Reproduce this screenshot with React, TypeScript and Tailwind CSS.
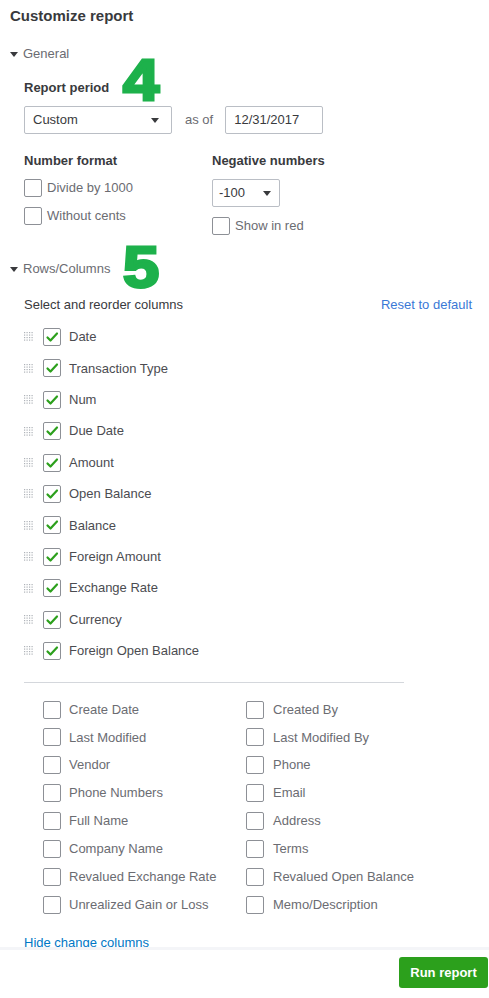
import React from "react";

const SELECTED_COLUMNS = [
  "Date",
  "Transaction Type",
  "Num",
  "Due Date",
  "Amount",
  "Open Balance",
  "Balance",
  "Foreign Amount",
  "Exchange Rate",
  "Currency",
  "Foreign Open Balance",
];

const OTHER_COLUMNS: [string, string][] = [
  ["Create Date", "Created By"],
  ["Last Modified", "Last Modified By"],
  ["Vendor", "Phone"],
  ["Phone Numbers", "Email"],
  ["Full Name", "Address"],
  ["Company Name", "Terms"],
  ["Revalued Exchange Rate", "Revalued Open Balance"],
  ["Unrealized Gain or Loss", "Memo/Description"],
];

function Caret({ className = "" }: { className?: string }) {
  return (
    <svg width="8" height="5" viewBox="0 0 8 5" className={className}>
      <path d="M0 0h8L4 5z" fill="currentColor" />
    </svg>
  );
}

function Checkbox({ checked = false }: { checked?: boolean }) {
  return (
    <span className="flex h-[18px] w-[18px] shrink-0 items-center justify-center rounded-[2px] border border-[#8d9096] bg-white">
      {checked && (
        <svg width="14" height="12" viewBox="0 0 14 12">
          <path d="M2.5 6.5l3 3L12 2.5" fill="none" stroke="#2ca01c" strokeWidth="2.2" strokeLinecap="round" strokeLinejoin="round" />
        </svg>
      )}
    </span>
  );
}

function DragHandle() {
  const dots = [];
  for (let r = 0; r < 4; r++) {
    for (let c = 0; c < 4; c++) {
      dots.push(<rect key={`${r}-${c}`} x={c * 2.5} y={r * 2.5} width="1.2" height="1.2" fill="#aeb2b8" />);
    }
  }
  return (
    <svg width="9" height="9" viewBox="0 0 9 9" className="shrink-0">
      {dots}
    </svg>
  );
}

function SectionToggle({ label }: { label: string }) {
  return (
    <div className="flex h-[20px] items-center gap-[5px] px-[10px] text-[13px] text-[#6b6c72]">
      <Caret className="text-[#393a3d]" />
      <span>{label}</span>
    </div>
  );
}

function Annotation({ children, className }: { children: React.ReactNode; className: string }) {
  return (
    <span
      className={`absolute left-[123px] origin-left scale-x-[1.12] text-[58px] leading-[58px] font-bold text-[#1db14b] [-webkit-text-stroke:3px_#1db14b] ${className}`}
    >
      {children}
    </span>
  );
}

export default function App() {
  return (
    <div className="relative h-[998px] w-[489px] overflow-hidden bg-white font-['Liberation_Sans',Arial,sans-serif] text-[#393a3d]">
      <div className="relative h-[947px] overflow-hidden">
        <div className="flex h-[32px] items-center px-[10px] text-[15px] font-bold">Customize report</div>

        <div className="mt-[12px]">
          <SectionToggle label="General" />
        </div>

        <div className="px-[24px]">
          <div className="mt-[14px] flex h-[20px] items-center text-[13px] font-bold text-[#393a3d]">Report period</div>
          <div className="mt-[8px] flex h-[28px] items-center">
            <div className="flex h-[28px] w-[148px] items-center justify-between rounded-[2px] border border-[#babec5] pl-[8px] pr-[12px] text-[13px] text-[#393a3d]">
              <span>Custom</span>
              <Caret className="text-[#393a3d]" />
            </div>
            <span className="ml-[13px] text-[13px] text-[#6b6c72]">as of</span>
            <div className="ml-[12px] flex h-[28px] w-[98px] items-center rounded-[2px] border border-[#babec5] pl-[8px] text-[13px] text-[#393a3d]">
              12/31/2017
            </div>
          </div>

          <div className="mt-[17px] grid grid-cols-[188px_1fr]">
            <div>
              <div className="flex h-[20px] items-center text-[13px] font-bold">Number format</div>
              <div className="mt-[8px] flex flex-col gap-[10px]">
                <label className="flex h-[18px] items-center gap-[5px] text-[13px] text-[#6b6c72]">
                  <Checkbox />
                  Divide by 1000
                </label>
                <label className="flex h-[18px] items-center gap-[5px] text-[13px] text-[#6b6c72]">
                  <Checkbox />
                  Without cents
                </label>
              </div>
            </div>
            <div>
              <div className="flex h-[20px] items-center text-[13px] font-bold">Negative numbers</div>
              <div className="mt-[8px] flex h-[28px] w-[68px] items-center justify-between rounded-[2px] border border-[#babec5] pl-[6px] pr-[8px] text-[13px] text-[#393a3d]">
                <span>-100</span>
                <Caret className="text-[#393a3d]" />
              </div>
              <label className="mt-[10px] flex h-[18px] items-center gap-[5px] text-[13px] text-[#6b6c72]">
                <Checkbox />
                Show in red
              </label>
            </div>
          </div>
        </div>

        <div className="mt-[24px]">
          <SectionToggle label="Rows/Columns" />
        </div>

        <div className="px-[24px]">
          <div className="mt-[16px] flex h-[20px] items-center justify-between text-[13px]">
            <span className="text-[#393a3d]">Select and reorder columns</span>
            <span className="mr-[-7px] text-[#3a78d6]">Reset to default</span>
          </div>

          <div className="mt-[6.3px]">
            {SELECTED_COLUMNS.map((name) => (
              <div key={name} className="flex h-[31.4px] items-center text-[13px] text-[#4b4c51]">
                <DragHandle />
                <span className="ml-[10px]">
                  <Checkbox checked />
                </span>
                <span className="ml-[8px]">{name}</span>
              </div>
            ))}
          </div>

          <div className="mt-[15px] h-px w-[380px] bg-[#d4d7dc]" />

          <div className="mt-[13px] pl-[19px]">
            {OTHER_COLUMNS.map(([left, right]) => (
              <div key={left} className="grid h-[27.86px] grid-cols-[203px_1fr] items-center text-[13px] text-[#6b6c72]">
                <label className="flex items-center gap-[8px]">
                  <Checkbox />
                  {left}
                </label>
                <label className="flex items-center gap-[9px]">
                  <Checkbox />
                  {right}
                </label>
              </div>
            ))}
          </div>

          {/* footer overlaps the bottom of the scroll area */}
          <div className="mt-[14px] flex h-[20px] items-center text-[13px] text-[#0077c5]">Hide change columns</div>
        </div>

        <Annotation className="top-[51px]">4</Annotation>
        <Annotation className="top-[238px]">5</Annotation>
      </div>

      <div className="flex h-[51px] items-center justify-end border-t-[3px] border-[#f4f5f8] pr-[1px]">
        <button className="mt-[-3px] h-[31px] w-[89px] rounded-[3px] bg-[#2ca01c] text-[13px] font-bold text-white">
          Run report
        </button>
      </div>
    </div>
  );
}
